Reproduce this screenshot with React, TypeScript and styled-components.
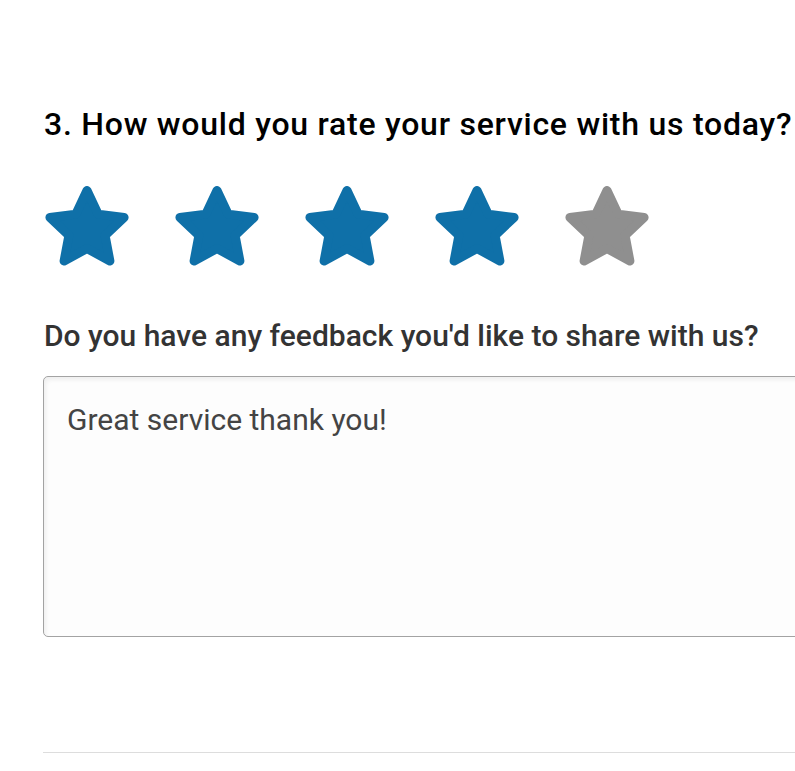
import React, { ReactElement } from 'react';
import styled, { createGlobalStyle } from 'styled-components';

const GlobalStyle = createGlobalStyle`
  html, body {
    margin: 0;
    padding: 0;
    background: #ffffff;
    overflow: hidden;
  }
  body {
    font-family: Roboto, "Liberation Sans", Arial, sans-serif;
  }
`;

const Styled = {
  Page: styled.div`
    width: 1000px;
    padding: 102px 0 0 44px;
  `,
  Question: styled.h2`
    margin: 0;
    font-size: 32px;
    line-height: 44px;
    font-weight: 500;
    letter-spacing: 0.75px;
    color: #000000;
    white-space: nowrap;
  `,
  Stars: styled.div`
    display: flex;
    gap: 44px;
    margin-top: 40px;
  `,
  Star: styled.svg<{ $filled: boolean }>`
    display: block;
    width: 86px;
    height: 80px;
    fill: ${(p) => (p.$filled ? '#0f70a8' : '#8f8f8f')};
    stroke: ${(p) => (p.$filled ? '#0f70a8' : '#8f8f8f')};
    cursor: pointer;
  `,
  Label: styled.label`
    display: block;
    margin-top: 52px;
    font-size: 30px;
    line-height: 36px;
    font-weight: 500;
    color: #333333;
    white-space: nowrap;
  `,
  Feedback: styled.textarea`
    display: block;
    box-sizing: border-box;
    width: 900px;
    height: 261px;
    margin: 22px 0 0 -1px;
    padding: 25px 23px;
    border: 1px solid #a3a3a3;
    border-radius: 5px;
    background: #fdfdfd;
    box-shadow: inset 2px 3px 4px rgba(0, 0, 0, 0.06);
    font-family: Roboto, "Liberation Sans", Arial, sans-serif;
    font-size: 30px;
    line-height: 36px;
    color: #444444;
    resize: none;
    outline: none;
  `,
  Divider: styled.hr`
    margin: 115px 0 0 -1px;
    border: none;
    border-top: 1px solid #dddddd;
  `,
};

// five point star with rounded corners (round joins on a thick stroke)
const starPoints = (() => {
  const cx = 43;
  const cy = 43.5;
  const outer = 39;
  const inner = 19;
  const pts: string[] = [];
  for (let i = 0; i < 10; i++) {
    const r = i % 2 === 0 ? outer : inner;
    const a = (Math.PI / 5) * i - Math.PI / 2;
    pts.push(`${(cx + r * Math.cos(a)).toFixed(2)},${(cy + r * Math.sin(a)).toFixed(2)}`);
  }
  return pts.join(' ');
})();

const RatingStar = ({ filled }: { filled: boolean }): ReactElement => (
  <Styled.Star $filled={filled} viewBox="0 0 86 80" aria-hidden="true">
    <polygon points={starPoints} strokeWidth={9} strokeLinejoin="round" />
  </Styled.Star>
);

export default function App(): ReactElement {
  const rating = 4;

  return (
    <>
      <GlobalStyle />
      <Styled.Page>
        <Styled.Question>
          3. How would you rate your service with us today?
        </Styled.Question>
        <Styled.Stars>
          {[1, 2, 3, 4, 5].map((n) => (
            <RatingStar key={n} filled={n <= rating} />
          ))}
        </Styled.Stars>
        <Styled.Label htmlFor="feedback">
          Do you have any feedback you'd like to share with us?
        </Styled.Label>
        <Styled.Feedback
          id="feedback"
          defaultValue="Great service thank you!"
        />
        <Styled.Divider />
      </Styled.Page>
    </>
  );
}
